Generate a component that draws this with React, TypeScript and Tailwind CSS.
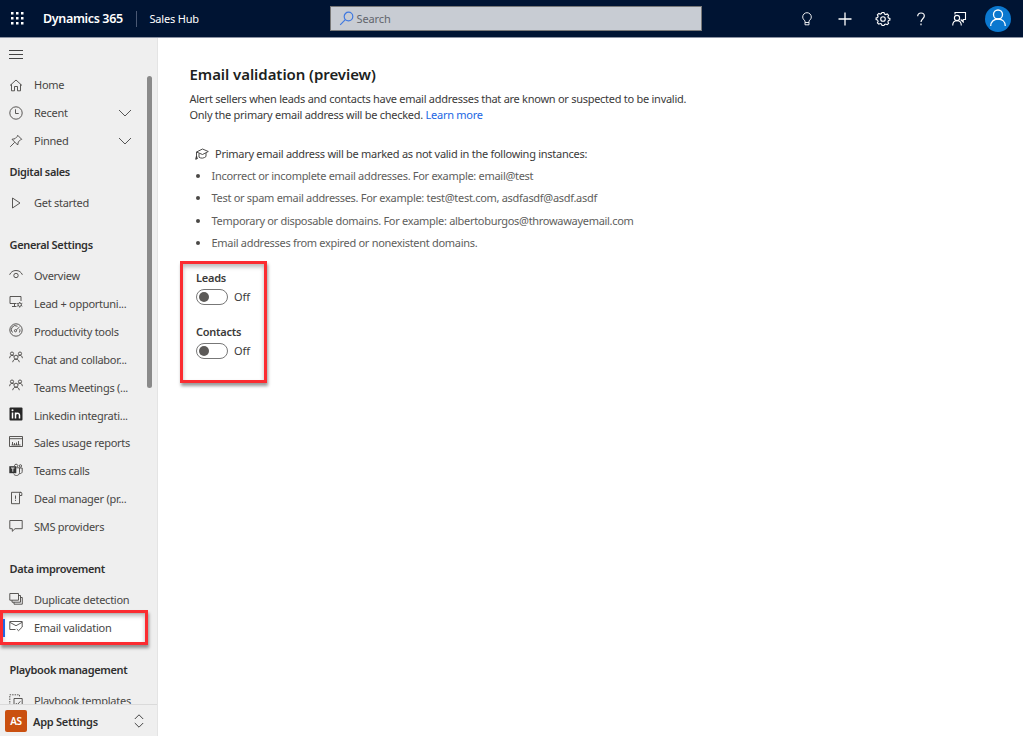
import React from "react";

type IconProps = { children: React.ReactNode; className?: string; box?: string; sw?: number };

function Icon({ children, className = "size-[14px]", box = "0 0 14 14", sw = 0.9 }: IconProps) {
  return (
    <svg
      viewBox={box}
      className={"block shrink-0 " + className}
      fill="none"
      stroke="currentColor"
      strokeWidth={sw}
    >
      {children}
    </svg>
  );
}

const people = (
  <Icon>
    <circle cx="3" cy="2.6" r="1.6" />
    <circle cx="11" cy="2.6" r="1.6" />
    <circle cx="7" cy="6.2" r="2" />
    <path d="M.6 7.2C.8 5.3 1.7 4.3 3 4.3c.9 0 1.6.5 2.1 1.1M13.4 7.2c-.2-1.9-1.1-2.9-2.4-2.9-.9 0-1.6.5-2.1 1.1M3.7 11.2c.2-1.9 1.5-3 3.3-3s3.1 1.1 3.3 3" />
  </Icon>
);

const icons = {
  home: (
    <Icon>
      <path d="M1 7.500 7 2 13 7.500M2.500 6.300v6.500H5.500V8.500h3v4.300h3V6.300" />
    </Icon>
  ),
  recent: (
    <Icon>
      <circle cx="7" cy="7" r="6.200" />
      <path d="M6.500 3.300v4.200h3.200" />
    </Icon>
  ),
  pinned: (
    <Icon>
      <path d="M8.700 1.300 12.700 5.300 11.600 5.700 9.300 8 8.700 11 3 5.300 6 4.700 8.300 2.400zM5.700 8.300 1.200 12.800" />
    </Icon>
  ),
  play: (
    <Icon>
      <path d="M3.500 2v10l7.500-5z" />
    </Icon>
  ),
  eye: (
    <Icon>
      <path d="M.6 6.800C1.700 4.100 4 2.500 7 2.500s5.300 1.600 6.400 4.300" />
      <circle cx="7" cy="7.500" r="2.200" />
    </Icon>
  ),
  monitor: (
    <Icon>
      <path d="M7.500 8.500H1v-7h11V6M5.500 8.500v3M3 11.500h4.500" />
      <circle cx="10.700" cy="9.700" r="1.700" />
      <path d="M10.700 7v1M10.700 11.400v1.200M8.200 8.300l1 .6M12.200 10.500l1.100.7M8.200 11.200l1-.6M12.200 8.900l1.100-.6" />
    </Icon>
  ),
  gauge: (
    <Icon>
      <circle cx="7" cy="7" r="6.200" />
      <circle cx="6.500" cy="7.700" r="1.100" />
      <path d="M7.300 6.900 10.500 4M3.500 9.500A4 4 0 0 1 8.500 3.300M10.800 6.200a4 4 0 0 1-.4 3.300" />
    </Icon>
  ),
  people,
  linkedin: (
    <Icon>
      <rect x=".5" y=".5" width="13" height="13" rx="1" fill="#262626" stroke="none" />
      <path d="M3.500 5.500v6M6.500 5.500v6M6.500 8.300c0-2.700 4-2.900 4 0v3.200" stroke="#fff" strokeWidth="1.500" />
      <circle cx="3.500" cy="3.300" r="1" fill="#fff" stroke="none" />
    </Icon>
  ),
  report: (
    <Icon>
      <path d="M.5 1.500h13v10H.5zM.5 3.700h13M3.500 10V7M5.500 10V8M7.500 10V7.500M9.500 10V6M2.500 10h9" />
    </Icon>
  ),
  teams: (
    <Icon>
      <rect x=".3" y="3.200" width="7" height="7" fill="#333" stroke="none" />
      <path d="M2 5h3.500M3.800 5v3.700" stroke="#eee" />
      <path d="M5.500 3V2.500a1.700 1.700 0 0 1 3.300 0c0 .8-.4 1.400-1.100 1.600M7.500 4.800h3v4.700c0 2-1.500 3-3 3s-2.500-.8-2.900-1.900M10.500 5h2.700v3.500c0 1.500-1.200 2.200-2.700 2.100" />
      <circle cx="11.400" cy="2.900" r="1.200" />
    </Icon>
  ),
  deal: (
    <Icon>
      <path d="M10.500 4.500v8.200h-8V1.300h9.300c-.9 0-1.300.4-1.300 1.300v1.900h2.300V2.300c0-.6-.4-1-1-1" />
      <path d="M6.500 4.500v3.300M6.500 8.800v1.100" />
    </Icon>
  ),
  sms: (
    <Icon>
      <path d="M.8 1.500h12.400v8.200H6L3.300 12.300V9.700H.8z" />
    </Icon>
  ),
  duplicate: (
    <Icon>
      <path d="M.8 1.500h8.700v6.700H.8zM9.500 3.500h2v6.700H3v-2M11.500 5.500h1.800v6.700H5v-2" />
    </Icon>
  ),
  mail: (
    <Icon>
      <path d="M6.500 10.500H.8v-8h12.400V8M.8 3.300 7 6.700l6.200-3.400M7.800 10l1.700 1.700L13.300 8" />
    </Icon>
  ),
  playbook: (
    <Icon>
      <path d="M.8 13.500V.8h9.700v2" strokeDasharray="1.500 1" />
      <path d="M5 4.500h8.200v9.300H5zM6.800 9l1.600 1.600 3-3.300" />
    </Icon>
  ),
};

type RowProps = {
  icon: React.ReactNode;
  label: string;
  expandable?: boolean;
  sub?: boolean;
};

function Row({ icon, label, expandable, sub }: RowProps) {
  return (
    <div className={"flex h-[27.9px] shrink-0 items-center pl-[9px] " + (sub ? "pt-[0.6px]" : "")}>
      <span className={"w-[25px] " + (sub ? "pb-[3px]" : "")}>{icon}</span>
      <span className="whitespace-nowrap">{label}</span>
      {expandable && (
        <svg viewBox="0 0 14 8" className="mr-[25px] ml-auto h-2 w-[14px]" fill="none" stroke="#555" strokeWidth="1">
          <path d="M1 1l6 6 6-6" />
        </svg>
      )}
    </div>
  );
}

function Group({ label, first }: { label: string; first?: boolean }) {
  return (
    <h3
      className={
        "flex shrink-0 items-center pl-[9.5px] font-semibold whitespace-nowrap tracking-[-0.34px] text-[#303030] " +
        (first ? "h-[34.3px]" : "h-[45px] pt-[11px]")
      }
    >
      {label}
    </h3>
  );
}

function Toggle({ label }: { label: string }) {
  return (
    <div className="h-[54px]">
      <div className="h-[17px] leading-[17px] font-semibold tracking-[-0.25px]">{label}</div>
      <div className="mt-[3px] flex h-4 items-center gap-[6px]">
        <span className="flex h-4 w-8 items-center rounded-full border border-[#777] bg-white pl-[2px]">
          <span className="size-[10px] rounded-full bg-[#5c5a58]" />
        </span>
        <span className="tracking-normal">Off</span>
      </div>
    </div>
  );
}

function Header() {
  return (
    <header className="mr-px flex h-[38px] shrink-0 items-center border-b border-[#8c93a3] bg-[#001433] text-white">
      <svg viewBox="0 0 13 13" className="ml-[11px] size-[13px]" fill="#fff">
        {[0, 5, 10].map((y) => [0, 5, 10].map((x) => <rect key={`${x}-${y}`} x={x} y={y} width="2.500" height="2.500" />))}
      </svg>
      <span className="ml-[19px] w-[93px] text-[12.5px] font-semibold whitespace-nowrap tracking-[-0.35px]">Dynamics 365</span>
      <span className="h-4 w-px bg-[#4a5873]" />
      <span className="ml-[12.5px] w-[180px] text-[11px] tracking-[-0.2px]">Sales Hub</span>
      <div className="flex h-[25px] w-[372px] items-center border border-[#777] bg-[#c8ccd3] pl-[8px] text-[11px] tracking-[-0.1px] text-[#62656c]">
        <Icon className="size-[15px]" box="0 0 15 15" sw={1.2}>
          <g stroke="#3f78e0">
            <circle cx="9.500" cy="5.500" r="4.300" />
            <path d="M6.300 8.700 1.200 13.800" />
          </g>
        </Icon>
        <span className="ml-[3px]">Search</span>
      </div>
      <div className="mr-[12px] ml-auto flex items-center">
        <Icon className="mr-[22px] size-4" box="0 0 16 16">
          <path d="M6 11.500V9.800C4.800 9 3.700 7.700 3.700 6a4.300 4.300 0 0 1 8.600 0c0 1.700-1.100 3-2.300 3.800v1.700zM6 11.500v2.300h4v-2.300" />
        </Icon>
        <Icon className="mr-[22px] size-4" box="0 0 16 16" sw={1.300}>
          <path d="M8 1.500v13M1.500 8h13" />
        </Icon>
        <Icon className="mr-[22px] size-4" box="0 0 16 16" sw={1.100}>
          <circle cx="8" cy="8" r="2.300" />
          <path d="M7 1.500h2l.5 1.600 1.300.5 1.400-.7 1.400 1.400-.7 1.400.5 1.300 1.500.5v1.600l-1.500.5-.5 1.300.7 1.400-1.400 1.400-1.400-.7-1.300.5L9 14.500H7L6.500 13l-1.300-.5-1.400.7-1.400-1.400.7-1.400-.5-1.300-1.500-.5V7l1.500-.5.5-1.300-.7-1.400 1.400-1.400 1.400.7 1.300-.5z" />
        </Icon>
        <Icon className="mr-[22px] size-4" box="0 0 16 16" sw={1.200}>
          <path d="M4.700 5.200C4.700 3.200 6 2 8 2s3.300 1.200 3.300 3c0 2.500-3.300 3-3.300 6M8 12.500v1.800" />
        </Icon>
        <Icon className="mr-[18px] size-4" box="0 0 16 16" sw={1.100}>
          <circle cx="6" cy="7" r="2.600" />
          <path d="M1.700 14.500C1.700 11.500 3.500 9.700 6 9.700s4.300 1.800 4.300 4.800M4 3.500v-2h10.500v7h-2.300V11L9.700 8.500" />
        </Icon>
        <span className="flex size-[26px] items-center justify-center rounded-full bg-[#0b78cf] pb-[2px]">
          <Icon className="size-[18px]" box="0 0 18 18" sw={1.300}>
            <circle cx="9" cy="5.500" r="4.500" />
            <path d="M1.700 17c0-4.200 3-7 7.300-7s7.300 2.800 7.300 7" />
          </Icon>
        </span>
      </div>
    </header>
  );
}

function Sidebar() {
  return (
    <aside className="relative flex w-[158px] shrink-0 flex-col border-r border-[#e4e4e4] bg-[#efefef] text-[#484644]">
      <div className="flex min-h-0 flex-1 flex-col overflow-hidden">
        <div className="flex h-[33px] shrink-0 items-center pl-[9px]">
          <svg viewBox="0 0 14 9" className="h-[9px] w-[14px]" stroke="#444" strokeWidth="1">
            <path d="M0 .5h14M0 4.500h14M0 8.500h14" />
          </svg>
        </div>
        <Row icon={icons.home} label="Home" />
        <Row icon={icons.recent} label="Recent" expandable />
        <Row icon={icons.pinned} label="Pinned" expandable />
        <Group label="Digital sales" first />
        <Row icon={icons.play} label="Get started" />
        <Group label="General Settings" />
        <Row sub icon={icons.eye} label="Overview" />
        <Row sub icon={icons.monitor} label="Lead + opportuni..." />
        <Row sub icon={icons.gauge} label="Productivity tools" />
        <Row sub icon={icons.people} label="Chat and collabor..." />
        <Row sub icon={icons.people} label="Teams Meetings (..." />
        <Row sub icon={icons.linkedin} label="Linkedin integrati..." />
        <Row sub icon={icons.report} label="Sales usage reports" />
        <Row sub icon={icons.teams} label="Teams calls" />
        <Row sub icon={icons.deal} label="Deal manager (pr..." />
        <Row sub icon={icons.sms} label="SMS providers" />
        <Group label="Data improvement" />
        <Row sub icon={icons.duplicate} label="Duplicate detection" />
        <div className="relative h-[27.9px] shrink-0">
          <div className="mr-3 bg-white">
            <Row sub icon={icons.mail} label="Email validation" />
          </div>
          <div className="absolute -top-1 left-0 h-[35px] w-[148px] border-[3px] border-[#fb2c31] shadow-[1px_3px_3px_#0006,inset_0_3px_4px_#0004]" />
          <span className="absolute top-[5px] left-[3px] h-[18px] w-[2px] bg-[#2266e3]" />
        </div>
        <Group label="Playbook management" />
        <div className="pt-px">
          <Row icon={icons.playbook} label="Playbook templates" />
        </div>
      </div>
      <div className="flex h-8 shrink-0 items-center border-t border-[#dadada] pl-[5px]">
        <span className="flex size-[22px] items-center justify-center rounded-[2px] bg-[#ca5010] text-[10px] font-semibold text-white">
          AS
        </span>
        <span className="ml-[6px] pt-[2px] font-semibold tracking-[-0.25px] text-[#303030]">App Settings</span>
        <svg viewBox="0 0 10 14" className="mr-[13px] ml-auto h-[14px] w-[10px]" fill="none" stroke="#444">
          <path d="M.8 5 5 .8 9.200 5M.8 9 5 13.200 9.200 9" />
        </svg>
      </div>
      <span className="absolute top-[38px] left-[147px] h-[312px] w-[5px] rounded-full bg-[#8a8a8a]" />
    </aside>
  );
}

const instances = [
  "Incorrect or incomplete email addresses. For example: email@test",
  "Test or spam email addresses. For example: test@test.com, asdfasdf@asdf.asdf",
  "Temporary or disposable domains. For example: albertoburgos@throwawayemail.com",
  "Email addresses from expired or nonexistent domains.",
];

export default function App() {
  return (
    <div className="flex h-[736px] w-[1024px] flex-col overflow-hidden bg-white font-['Noto_Sans','Open_Sans',sans-serif] text-[11px] leading-4 tracking-[-0.27px] text-[#3b3a39]">
      <Header />
      <div className="flex min-h-0 flex-1">
        <Sidebar />
        <main className="flex flex-1 flex-col items-start pt-[26px] pl-[31.5px] whitespace-nowrap">
          <h1 className="h-5 text-[15px] leading-5 font-semibold tracking-[-0.06px] text-[#201f1e]">Email validation (preview)</h1>
          <p className="mt-[7px]">Alert sellers when leads and contacts have email addresses that are known or suspected to be invalid.</p>
          <p>
            Only the primary email address will be checked. <a className="text-[#2266e3]">Learn more</a>
          </p>
          <div className="mt-[22px] flex h-[18px] items-center pl-[5px]">
            <Icon className="h-3 w-[14px]" box="0 0 14 12">
              <path d="M1.500 4 7.500 1 13.300 3.500 7.500 6.500zM4 5.500v3.700c2 1.500 5 1.200 7-.7V5M1.500 4v7.500M.5 11.500 1.500 8l1 3" />
            </Icon>
            <span className="ml-[6.5px]">Primary email address will be marked as not valid in the following instances:</span>
          </div>
          <ul className="mt-[2px] pl-[6px] tracking-[-0.3px] text-[#605e5c]">
            {instances.map((t) => (
              <li key={t} className="flex h-[22.3px] items-center">
                <span className="mr-3 size-1 rounded-full bg-[#4a4846]" />
                {t}
              </li>
            ))}
          </ul>
          <section className="mt-[7px] -ml-[9.5px] h-[122px] w-[87px] border-[3px] border-[#fb2c31] pt-[5px] pl-[13px] shadow-[1px_3px_3px_#0006,inset_0_3px_4px_#0004]">
            <Toggle label="Leads" />
            <Toggle label="Contacts" />
          </section>
        </main>
      </div>
    </div>
  );
}
